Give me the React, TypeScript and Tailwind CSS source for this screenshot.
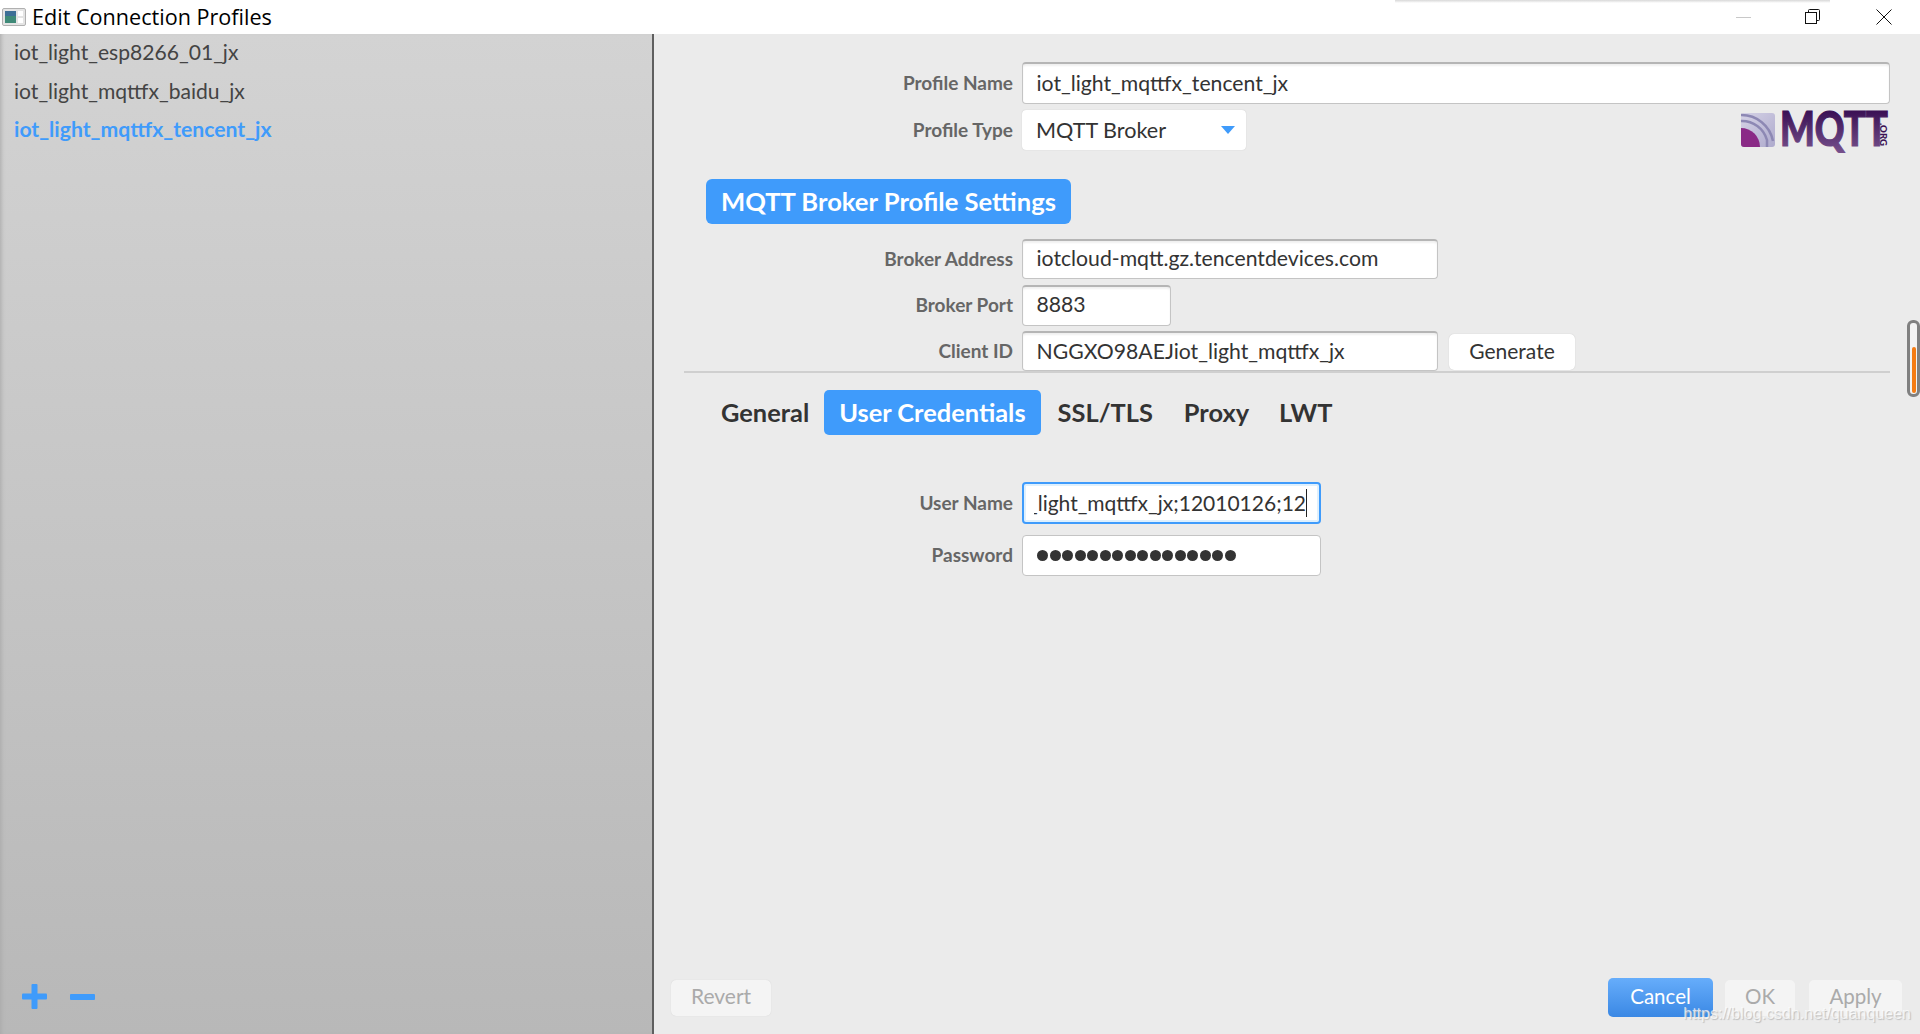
const lato = "font-['Lato','Noto_Sans',sans-serif]";

const Row = ({ label, className, children }: { label: string; className: string; children: React.ReactNode }) => (
  <div className={`flex items-stretch gap-2 ${className}`}>
    <div className="flex w-[360px] shrink-0 items-center justify-end pr-px text-[19px] font-bold text-[#666666]">{label}</div>
    {children}
  </div>
);

const Field = ({ value, className }: { value: string; className: string }) => (
  <div className={`flex items-center rounded-[4px] border border-[#c4c4c4] border-t-[#b5b5b5] border-t-2 bg-white pl-[13.5px] text-[21.2px] text-[#333333] shadow-[inset_0_2px_2px_#f0f0f0] ${className}`}>
    {value}
  </div>
);

const Tab = ({ label, active }: { label: string; active?: boolean }) => (
  <div className={`flex h-[45px] items-center rounded-[5px] px-[15px] text-[25.4px] font-bold ${active ? "bg-[#3f9bfb] text-white" : "text-[#333333]"}`}>
    {label}
  </div>
);

const MqttLogo = () => (
  <svg width="150" height="37" viewBox="0 0 150 37" className="block overflow-visible">
    <defs>
      <linearGradient id="mq" x1="0" y1="0" x2="0" y2="1">
        <stop offset="0.2" stopColor="#3b1155" />
        <stop offset="1" stopColor="#7a5590" />
      </linearGradient>
      <linearGradient id="sq" x1="0" y1="0" x2="1" y2="1">
        <stop offset="0" stopColor="#d6d3e6" />
        <stop offset="1" stopColor="#aeaacd" />
      </linearGradient>
    </defs>
    <rect x="1" y="1" width="34" height="34" rx="3" fill="url(#sq)" />
    <path d="M1 16a19 19 0 0 1 19 19h-16a3 3 0 0 1-3-3z" fill="#8a2a86" />
    <path d="M1 9a26 26 0 0 1 26 19v7M1 3a32 32 0 0 1 32 26" fill="none" stroke="#8d88b4" strokeWidth="2.5" />
    <text x="40" y="34" textLength="108" lengthAdjust="spacingAndGlyphs" fontFamily="Lato" fontWeight="900" fontSize="47" fill="url(#mq)" stroke="url(#mq)" strokeWidth="1.2">MQTT</text>
    <text transform="translate(140 11) rotate(90)" x="0" y="0" textLength="23" lengthAdjust="spacingAndGlyphs" fontFamily="Lato" fontWeight="900" fontSize="10" fill="#3b1155">.ORG</text>
  </svg>
);

export default function App() {
  return (
    <div className={`flex h-[1034px] w-[1920px] flex-col overflow-hidden bg-white ${lato}`}>
      {/* title bar */}
      <div className="relative flex h-[34px] shrink-0 items-center bg-white">
        <div className="absolute left-[1395px] top-0 h-[3px] w-[435px] bg-gradient-to-b from-[#d8d8d8] to-white" />
        <svg width="24" height="18" viewBox="0 0 24 18" className="ml-[2px]">
          <rect x="0.5" y="0.5" width="23" height="17" rx="1.5" fill="#e4e4e4" stroke="#b0b0b0" />
          <rect x="3" y="3" width="11" height="12" fill="#3f8a78" />
          <rect x="3" y="3" width="11" height="5" fill="#3d6f96" />
          <rect x="16" y="3" width="5" height="5" fill="#ffffff" />
          <rect x="16" y="10" width="5" height="5" fill="#ffffff" />
        </svg>
        <span className="ml-[6px] font-['Open_Sans',sans-serif] text-[21.6px] text-black">Edit Connection Profiles</span>
        <div className="ml-auto flex items-center">
          <div className="mr-[54px] h-px w-[15px] bg-[#c8c8c8]" />
          <svg width="16" height="16" viewBox="0 0 16 16" className="mr-[55px]" fill="none" stroke="#111111">
            <rect x="0.5" y="3.5" width="11" height="11" fill="#ffffff" />
            <path d="M3.5 3.5v-2a1 1 0 0 1 1-1h9a1 1 0 0 1 1 1v9a1 1 0 0 1-1 1h-2" />
          </svg>
          <svg width="16" height="16" viewBox="0 0 16 16" className="mr-[28px]" fill="none" stroke="#111111">
            <path d="M0.5 0.5l15 15M15.5 0.5l-15 15" />
          </svg>
        </div>
      </div>

      <div className="flex min-h-0 flex-1">
        {/* profile list */}
        <div className="flex w-[654px] shrink-0 flex-col border-r-2 border-[#5f5f5f] bg-gradient-to-b from-[#d3d3d3] to-[#b8b8b8] shadow-[inset_4px_0_4px_-3px_#a8a8a8]">
          <div className="flex h-[39px] items-center pb-[3px] pl-[14px] text-[21.1px] text-[#444444]">iot_light_esp8266_01_jx</div>
          <div className="flex h-[39px] items-center pb-[3px] pl-[14px] text-[21.1px] text-[#444444]">iot_light_mqttfx_baidu_jx</div>
          <div className="flex h-[39px] items-center pb-[3px] pl-[14px] text-[21.2px] font-bold text-[#3f9bfb]">iot_light_mqttfx_tencent_jx</div>
          <div className="mt-auto mb-[25px] ml-[22px] flex items-center gap-[23px]">
            <svg width="25" height="25" viewBox="0 0 25 25" fill="#3f9bfb">
              <rect x="9.5" y="0" width="6" height="25" rx="1" />
              <rect x="0" y="9.5" width="25" height="6" rx="1" />
            </svg>
            <svg width="25" height="6" viewBox="0 0 25 6" fill="#3f9bfb">
              <rect width="25" height="6" rx="1" />
            </svg>
          </div>
        </div>

        {/* settings */}
        <div className="relative flex min-w-0 flex-1 flex-col bg-[#ebebeb] pt-[28px]">
          <Row label="Profile Name" className="h-[42px] pr-[30px]">
            <Field value="iot_light_mqttfx_tencent_jx" className="flex-1" />
          </Row>
          <Row label="Profile Type" className="mt-[6px] h-[40px] pr-[30px]">
            <div className="flex w-[224px] items-center justify-between rounded-[4px] bg-white pl-[14px] pr-[11px] text-[21.6px] text-[#333333] shadow-[0_0_1px_#bbbbbb]">
              MQTT Broker
              <svg width="14" height="8" viewBox="0 0 14 8"><path d="M0 0h14l-7 8z" fill="#3f9bfb" /></svg>
            </div>
            <div className="ml-auto pt-[2px]"><MqttLogo /></div>
          </Row>

          <div className="mt-[29px] ml-[52px] flex h-[45px] w-[365px] items-center justify-center rounded-[6px] bg-[#3f9bfb] text-[25.6px] font-bold text-white">
            MQTT Broker Profile Settings
          </div>

          <Row label="Broker Address" className="mt-[15px] h-[40px]">
            <Field value="iotcloud-mqtt.gz.tencentdevices.com" className="w-[416px] pb-[2px]" />
          </Row>
          <Row label="Broker Port" className="mt-[6px] h-[41px]">
            <Field value="8883" className="w-[149px] pb-[2px]" />
          </Row>
          <Row label="Client ID" className="mt-[5px] h-[40px]">
            <Field value="NGGXO98AEJiot_light_mqttfx_jx" className="w-[416px]" />
            <div className="mt-[3px] ml-[3px] flex h-[36px] w-[126px] items-center justify-center rounded-[5px] bg-white pb-[2px] text-[21px] text-[#333333] shadow-[0_0_1px_#bbbbbb]">Generate</div>
          </Row>
          <div className="ml-[30px] mr-[30px] h-[2px] bg-[#cfcfcf]" />

          <div className="mt-[17px] ml-[52px] flex">
            <Tab label="General" />
            <Tab label="User Credentials" active />
            <div className="ml-[2px] flex"><Tab label="SSL/TLS" /></div>
            <div className="ml-px flex"><Tab label="Proxy" /></div>
            <Tab label="LWT" />
          </div>

          <Row label="User Name" className="mt-[47px] h-[42px]">
            <div className="flex w-[299px] items-center rounded-[4px] border-2 border-[#3f9bfb] bg-white pb-[1px] pl-[10px] text-[21px] text-[#333333] shadow-[inset_0_0_0_2px_#dff0fd]">
              {/* long value scrolled inside the field, start is clipped */}
              <div className="flex h-[28px] w-[273px] items-center justify-end overflow-hidden whitespace-nowrap">
                <span className="shrink-0 border-r border-[#222222]">iot_light_mqttfx_jx;12010126;12</span>
              </div>
            </div>
          </Row>
          <Row label="Password" className="mt-[11px] h-[41px]">
            <div className="flex w-[299px] items-center gap-[1.5px] rounded-[4px] border border-[#c4c4c4] bg-white pl-[14px]">
              {Array.from({ length: 16 }).map((_, i) => (
                <span key={i} className="h-[11px] w-[11px] rounded-full bg-[#333333]" />
              ))}
            </div>
          </Row>

          <div className="mt-auto mb-[17px] flex items-center pl-[17px] pr-[18px]">
            <div className="flex h-[36px] w-[100px] items-center justify-center rounded-[5px] bg-[#f4f4f4] pb-[3px] text-[21px] text-[#aaaaaa] shadow-[0_0_1px_#cccccc]">Revert</div>
            <div className="ml-auto flex h-[39px] w-[105px] items-center justify-center rounded-[5px] bg-gradient-to-b from-[#66adfb] to-[#3a88e4] pb-[3px] text-[20.5px] text-white">Cancel</div>
            <div className="ml-[12px] flex h-[36px] w-[70px] items-center justify-center rounded-[5px] bg-[#f4f4f4] pb-[3px] text-[20.5px] text-[#aaaaaa]">OK</div>
            <div className="ml-[14px] flex h-[36px] w-[93px] items-center justify-center rounded-[5px] bg-[#f4f4f4] pb-[3px] text-[20.5px] text-[#aaaaaa]">Apply</div>
          </div>

          {/* overlay scrollbar */}
          <div className="absolute right-0 top-[286px] h-[77px] w-[13px] rounded-[6px] border-[3px] border-[#808080] bg-[#f3f3f3] pt-[24px]">
            <div className="mx-auto h-[46px] w-[4px] rounded-[2px] bg-[#f57c14]" />
          </div>

          {/* watermark */}
          <div className="absolute right-[9px] bottom-[8px] font-['Liberation_Sans',sans-serif] text-[16px] text-white/70 [text-shadow:1px_1px_1px_#bdbdbd]">https://blog.csdn.net/quanqueen</div>
        </div>
      </div>
    </div>
  );
}
